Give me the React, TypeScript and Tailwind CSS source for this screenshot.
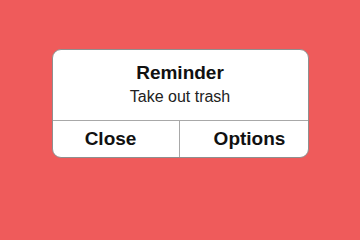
export default function App() {
  return (
    <div className="w-full min-h-screen bg-[#ef5b5b] flex items-start justify-center pt-[49px] font-['Liberation_Sans',Arial,sans-serif]">
      <div className="w-[257px] bg-white border border-[#8f8f8f] rounded-[9px] overflow-hidden">
        <div className="flex flex-col items-center pt-[12px] h-[70px]">
          <div className="text-[19px] leading-[22px] font-bold text-[#111]">Reminder</div>
          <div className="text-[16px] leading-[18px] text-[#222] mt-[4px]">Take out trash</div>
        </div>
        <div className="flex border-t border-[#a8a8a8] h-[37px]">
          <button className="flex-1 flex items-center justify-center pr-[10px] text-[19px] font-bold text-[#111]">
            Close
          </button>
          <div className="w-px bg-[#a8a8a8]" />
          <button className="flex-1 flex items-center justify-center pl-[12px] text-[19px] font-bold text-[#111]">
            Options
          </button>
        </div>
      </div>
    </div>
  )
}
